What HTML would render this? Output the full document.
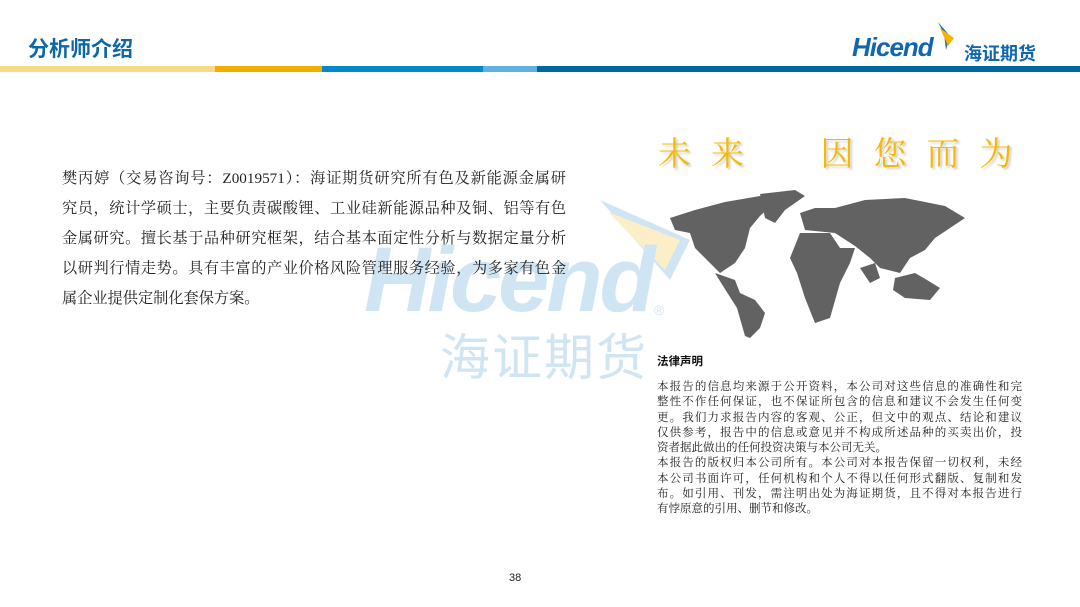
<!DOCTYPE html>
<html><head><meta charset="utf-8"><style>
body{margin:0;width:1080px;height:607px;position:relative;background:#fff;overflow:hidden;font-family:"Liberation Sans","Noto Sans CJK SC",sans-serif}
.a{position:absolute}
.t{left:28px;top:33px;font-size:21px;font-weight:bold;color:#0b67a8}
.body{left:62px;top:164px;width:504px;font-family:"Liberation Serif","Noto Serif CJK SC",serif;font-size:15.2px;line-height:30px;color:#222}
.legal{left:657px;top:380px;width:365px;font-family:"Liberation Serif","Noto Serif CJK SC",serif;font-size:11.5px;line-height:15.3px;color:#222}
.j{text-align:justify;text-align-last:justify;white-space:nowrap}
.l{white-space:nowrap}
</style></head><body>
<div class="a t">分析师介绍</div>
<div class="a" style="left:852px;top:24px;height:40px;width:200px">
 <span class="a" style="left:0;top:8px;font-size:26px;font-style:italic;font-weight:bold;color:#1166b0;letter-spacing:-1px">Hicend</span>
 <svg class="a" style="left:84px;top:-2px" width="26" height="32" viewBox="0 0 26 32"><path d="M2 0 L14 14 L10 28 L8 12 Z" fill="#1a6fb5"/><path d="M4 6 L18 16 L12 24 Z" fill="#f4b400"/></svg>
 <span class="a" style="left:112px;top:16px;font-size:18px;color:#1166b0;font-weight:bold">海证期货</span>
</div>
<div class="a" style="left:0;top:66px;width:215px;height:6px;background:#f8d98a"></div>
<div class="a" style="left:215px;top:66px;width:107px;height:6px;background:#f0ae00"></div>
<div class="a" style="left:322px;top:66px;width:161px;height:6px;background:#0389c6"></div>
<div class="a" style="left:483px;top:66px;width:54px;height:6px;background:#5fb0e0"></div>
<div class="a" style="left:537px;top:66px;width:543px;height:6px;background:#02679f"></div>

<svg class="a" style="left:600px;top:200px" width="90" height="80" viewBox="0 0 90 80"><path d="M0 0 L90 40 L70 80 Z" fill="#cfe5f3"/><path d="M8 12 L80 40 L65 70 Z" fill="#fcefc8"/></svg>
<div class="a" style="left:364px;top:228px;font-size:92px;font-style:italic;font-weight:bold;color:#cfe5f3;letter-spacing:-3px">Hicend</div>
<div class="a" style="left:654px;top:302px;font-size:14px;color:#cfe5f3">®</div>
<div class="a" style="left:440px;top:318px;font-size:50px;color:#cfe5f3;letter-spacing:2px">海证期货</div>

<div class="a body">
<div class="j">樊丙婷（交易咨询号：Z0019571）：海证期货研究所有色及新能源金属研</div>
<div class="j">究员，统计学硕士，主要负责碳酸锂、工业硅新能源品种及铜、铝等有色</div>
<div class="j">金属研究。擅长基于品种研究框架，结合基本面定性分析与数据定量分析</div>
<div class="j">以研判行情走势。具有丰富的产业价格风险管理服务经验，为多家有色金</div>
<div class="l">属企业提供定制化套保方案。</div>
</div>

<div class="a" style="left:658px;top:128px;font-family:'Liberation Serif','Noto Serif CJK SC',serif;font-size:33px;color:#f6b800;letter-spacing:20px;text-shadow:2px 2px 2px #ccc;white-space:pre">未来  因您而为</div>

<svg class="a" style="left:665px;top:188px" width="310" height="152" viewBox="0 0 310 152" fill="#626262">
<path d="M5 30 L30 22 L60 14 L95 8 L110 14 L95 28 L85 40 L80 60 L70 75 L55 85 L45 75 L30 60 L25 45 L10 42 Z"/>
<path d="M95 6 L130 2 L140 8 L120 22 L110 35 L100 30 Z"/>
<path d="M50 85 L70 92 L75 105 L90 112 L100 125 L95 140 L85 150 L80 148 L72 120 L58 98 Z"/>
<path d="M135 45 L165 45 L175 60 L190 60 L185 75 L175 95 L165 130 L150 135 L140 110 L132 85 L125 70 Z"/>
<path d="M135 25 L150 20 L170 20 L200 12 L240 10 L280 18 L300 30 L285 40 L270 50 L260 62 L245 70 L235 85 L215 80 L205 70 L190 58 L170 45 L140 42 Z"/>
<path d="M230 90 L250 85 L262 92 L275 100 L265 112 L240 110 L228 102 Z"/>
<path d="M195 80 L210 75 L215 90 L205 95 Z"/>
</svg>

<div class="a" style="left:657px;top:353px;font-size:11.5px;font-weight:bold;color:#111">法律声明</div>
<div class="a legal">
<div class="j">本报告的信息均来源于公开资料，本公司对这些信息的准确性和完</div>
<div class="j">整性不作任何保证，也不保证所包含的信息和建议不会发生任何变</div>
<div class="j">更。我们力求报告内容的客观、公正，但文中的观点、结论和建议</div>
<div class="j">仅供参考，报告中的信息或意见并不构成所述品种的买卖出价，投</div>
<div class="l">资者据此做出的任何投资决策与本公司无关。</div>
<div class="j">本报告的版权归本公司所有。本公司对本报告保留一切权利，未经</div>
<div class="j">本公司书面许可，任何机构和个人不得以任何形式翻版、复制和发</div>
<div class="j">布。如引用、刊发，需注明出处为海证期货，且不得对本报告进行</div>
<div class="l">有悖原意的引用、删节和修改。</div>
</div>

<div class="a" style="left:509px;top:572px;font-size:11px;color:#222">38</div>
</body></html>
